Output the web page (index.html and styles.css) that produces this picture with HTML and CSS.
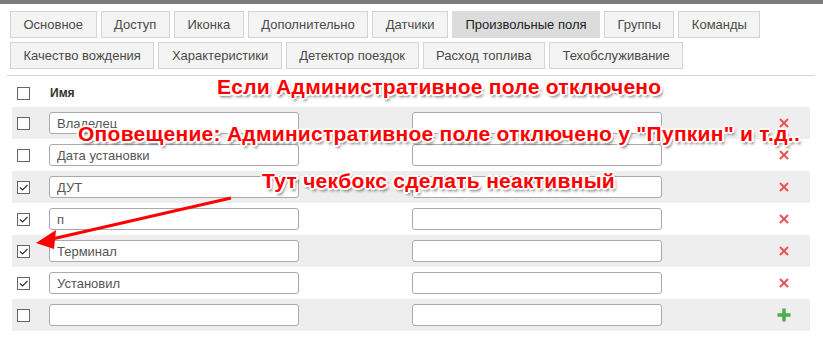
FILE: index.html
```html
<!DOCTYPE html>
<html lang="ru">
<head>
    <meta charset="UTF-8">
    <title>Произвольные поля</title>
    <link rel="stylesheet" href="styles.css">
</head>
<body>
    <div class="topbar"></div>

    <div class="tabs">
        <span class="tab">Основное</span>
        <span class="tab">Доступ</span>
        <span class="tab">Иконка</span>
        <span class="tab">Дополнительно</span>
        <span class="tab">Датчики</span>
        <span class="tab active">Произвольные поля</span>
        <span class="tab">Группы</span>
        <span class="tab">Команды</span>
        <span class="tab">Качество вождения</span>
        <span class="tab">Характеристики</span>
        <span class="tab">Детектор поездок</span>
        <span class="tab">Расход топлива</span>
        <span class="tab">Техобслуживание</span>
    </div>

    <div class="fields">
        <div class="row head">
            <span class="check"></span>
            <span class="title">Имя</span>
            <span></span>
            <span></span>
        </div>
        <div class="row odd">
            <span class="check"></span>
            <input class="field" type="text" value="Владелец">
            <input class="field" type="text" value="">
            <span class="act del"><svg viewBox="0 0 10 10"><path d="M1 1L9 9M9 1L1 9"/></svg></span>
        </div>
        <div class="row">
            <span class="check"></span>
            <input class="field" type="text" value="Дата установки">
            <input class="field" type="text" value="">
            <span class="act del"><svg viewBox="0 0 10 10"><path d="M1 1L9 9M9 1L1 9"/></svg></span>
        </div>
        <div class="row odd">
            <span class="check on"><svg viewBox="0 0 11 11"><path d="M2 5.5L4.5 8L9.5 3"/></svg></span>
            <input class="field" type="text" value="ДУТ">
            <input class="field" type="text" value="">
            <span class="act del"><svg viewBox="0 0 10 10"><path d="M1 1L9 9M9 1L1 9"/></svg></span>
        </div>
        <div class="row">
            <span class="check on"><svg viewBox="0 0 11 11"><path d="M2 5.5L4.5 8L9.5 3"/></svg></span>
            <input class="field" type="text" value="п">
            <input class="field" type="text" value="">
            <span class="act del"><svg viewBox="0 0 10 10"><path d="M1 1L9 9M9 1L1 9"/></svg></span>
        </div>
        <div class="row odd">
            <span class="check on"><svg viewBox="0 0 11 11"><path d="M2 5.5L4.5 8L9.5 3"/></svg></span>
            <input class="field" type="text" value="Терминал">
            <input class="field" type="text" value="">
            <span class="act del"><svg viewBox="0 0 10 10"><path d="M1 1L9 9M9 1L1 9"/></svg></span>
        </div>
        <div class="row">
            <span class="check on"><svg viewBox="0 0 11 11"><path d="M2 5.5L4.5 8L9.5 3"/></svg></span>
            <input class="field" type="text" value="Установил">
            <input class="field" type="text" value="">
            <span class="act del"><svg viewBox="0 0 10 10"><path d="M1 1L9 9M9 1L1 9"/></svg></span>
        </div>
        <div class="row odd">
            <span class="check"></span>
            <input class="field" type="text" value="">
            <input class="field" type="text" value="">
            <span class="act add"><svg viewBox="0 0 14 14"><path d="M7 0.5V13.5M0.5 7H13.5"/></svg></span>
        </div>
    </div>

    <!-- notes drawn over the screenshot -->
    <div class="note note1">Если Административное поле отключено</div>
    <div class="note note2">Оповещение: Административное поле отключено у "Пупкин" и т.д..</div>
    <div class="note note3">Тут чекбокс сделать неактивный</div>
    <svg class="arrow" width="823" height="352" viewBox="0 0 823 352">
        <path d="M231 198L52 239" />
        <polygon points="36,243 56,230 54,249" />
    </svg>
</body>
</html>
```

FILE: styles.css
```css
body {
    margin: 0;
    background: #fff;
    font-family: "Liberation Sans", Arial, sans-serif;
    font-size: 13px;
    color: #555;
    position: relative;
    width: 823px;
    height: 352px;
    overflow: hidden;
}
.topbar {
    height: 4px;
    background: #7b7b7b;
}
.tabs {
    display: flex;
    flex-wrap: wrap;
    gap: 4px;
    padding: 7px 10px 0;
    width: 800px;
}
.tab {
    box-sizing: border-box;
    height: 27px;
    line-height: 25px;
    padding: 0 12.5px;
    background: #f4f4f4;
    border: 1px solid #d4d4d4;
    color: #4a4a4a;
}
.tab.active {
    background: #dcdcdc;
    border-color: #dcdcdc;
    color: #222;
}
.fields {
    margin: 6px 8px 0 7px;
    border-top: 1px solid #d6d6d6;
    padding: 0 5px;
    width: 798px;
}
.row {
    display: grid;
    grid-template-columns: 37px 363px 346px 1fr;
    align-items: center;
    height: 32px;
}
.row.head {
    height: 31px;
    padding-top: 3px;
    box-sizing: border-box;
}
.row.odd {
    background: #eee;
}
.title {
    font-weight: bold;
    font-size: 12px;
    color: #333;
    padding-left: 1px;
}
.check {
    box-sizing: border-box;
    width: 13px;
    height: 13px;
    margin-left: 5px;
    border: 1px solid #666;
    background: #fff;
    display: flex;
}
.check svg {
    width: 11px;
    height: 11px;
    fill: none;
    stroke: #333;
    stroke-width: 1.2;
}
.field {
    box-sizing: border-box;
    width: 250px;
    height: 22px;
    margin: 0;
    padding: 0 7px;
    border: 1px solid #aaa;
    border-radius: 3px;
    background: #fff;
    font-family: "Liberation Sans", Arial, sans-serif;
    font-size: 13px;
    color: #555;
}
.act {
    display: flex;
    justify-content: center;
}
.del svg {
    width: 10px;
    height: 10px;
    fill: none;
    stroke: #f0524f;
    stroke-width: 2;
}
.add svg {
    width: 14px;
    height: 14px;
    fill: none;
    stroke: #4cae4c;
    stroke-width: 3.4;
}
.note {
    position: absolute;
    font-weight: bold;
    font-size: 21px;
    letter-spacing: 0.27px;
    line-height: 24px;
    color: #f00;
    white-space: nowrap;
    text-shadow:
        -2px 0 0 #fff, 2px 0 0 #fff, 0 -2px 0 #fff, 0 2px 0 #fff,
        -1px -1px 0 #fff, 1px -1px 0 #fff, -1px 1px 0 #fff, 1px 1px 0 #fff,
        -2px -1px 0 #fff, 2px 1px 0 #fff, -1px 2px 0 #fff, 1px -2px 0 #fff,
        2px 3px 3px rgba(0, 0, 0, 0.6);
}
.note1 {
    left: 217px;
    top: 75px;
}
.note2 {
    left: 78px;
    top: 122px;
}
.note3 {
    left: 262px;
    top: 169px;
}
.arrow {
    position: absolute;
    left: 0;
    top: 0;
}
.arrow path {
    stroke: #f00;
    stroke-width: 3;
    fill: none;
}
.arrow polygon {
    fill: #f00;
}
```
